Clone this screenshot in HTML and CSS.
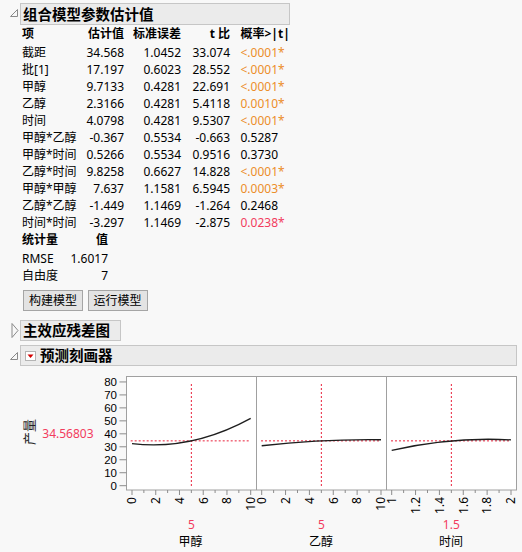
FILE: index.html
```html
<!DOCTYPE html>
<html>
<head>
<meta charset="utf-8">
<link rel="stylesheet" href="styles.css">
</head>
<body>
<div class="outline-head">
  <svg class="disclosure" width="20" height="22" viewBox="0 0 20 22"><polygon points="10.5,13.5 17.5,13.5 17.5,6.5" class="tri"/></svg>
  <div class="title-box w1">组合模型参数估计值</div>
</div>
<div class="params">
  <div class="th">项</div><div class="th r">估计值</div><div class="th r">标准误差</div><div class="th r">t 比</div><div class="th p">概率&gt;|t|</div>
  <div>截距</div><div class="r">34.568</div><div class="r">1.0452</div><div class="r">33.074</div><div class="p orange">&lt;.0001*</div>
  <div>批[1]</div><div class="r">17.197</div><div class="r">0.6023</div><div class="r">28.552</div><div class="p orange">&lt;.0001*</div>
  <div>甲醇</div><div class="r">9.7133</div><div class="r">0.4281</div><div class="r">22.691</div><div class="p orange">&lt;.0001*</div>
  <div>乙醇</div><div class="r">2.3166</div><div class="r">0.4281</div><div class="r">5.4118</div><div class="p orange">0.0010*</div>
  <div>时间</div><div class="r">4.0798</div><div class="r">0.4281</div><div class="r">9.5307</div><div class="p orange">&lt;.0001*</div>
  <div>甲醇*乙醇</div><div class="r">-0.367</div><div class="r">0.5534</div><div class="r">-0.663</div><div class="p">0.5287</div>
  <div>甲醇*时间</div><div class="r">0.5266</div><div class="r">0.5534</div><div class="r">0.9516</div><div class="p">0.3730</div>
  <div>乙醇*时间</div><div class="r">9.8258</div><div class="r">0.6627</div><div class="r">14.828</div><div class="p orange">&lt;.0001*</div>
  <div>甲醇*甲醇</div><div class="r">7.637</div><div class="r">1.1581</div><div class="r">6.5945</div><div class="p orange">0.0003*</div>
  <div>乙醇*乙醇</div><div class="r">-1.449</div><div class="r">1.1469</div><div class="r">-1.264</div><div class="p">0.2468</div>
  <div>时间*时间</div><div class="r">-3.297</div><div class="r">1.1469</div><div class="r">-2.875</div><div class="p red">0.0238*</div>
</div>
<div class="stats">
  <div class="th">统计量</div><div class="th r">值</div>
  <div>RMSE</div><div class="r">1.6017</div>
  <div>自由度</div><div class="r">7</div>
</div>
<div class="buttons">
  <button class="btn">构建模型</button>
  <button class="btn">运行模型</button>
</div>
<div class="outline-head h2">
  <svg class="disclosure" width="20" height="21" viewBox="0 0 20 21"><polygon points="12,3.5 18,10.5 12,17.5" class="tri"/></svg>
  <div class="title-box w2">主效应残差图</div>
</div>
<div class="outline-head h3">
  <svg class="disclosure" width="20" height="21" viewBox="0 0 20 21"><polygon points="10.5,14.5 17.5,14.5 17.5,7.5" class="tri"/></svg>
  <div class="title-box w3">
    <svg class="menu-icon" width="11" height="10" viewBox="0 0 11 10"><rect x="0.5" y="0.5" width="10" height="9" fill="#fff" stroke="#b4b4b4"/><polygon points="2.5,3.5 8.5,3.5 5.5,7" fill="#d40000"/></svg>
    <span>预测刻画器</span>
  </div>
</div>
<svg class="profiler" width="522" height="186" viewBox="0 366 522 186">
  <text class="ytitle" transform="translate(29,432) rotate(-90)" text-anchor="middle" dy="0.36em">产量</text>
  <text class="redtxt" x="42.3" y="434" dy="0.36em">34.56803</text>
  <rect x="126.5" y="376.5" width="390" height="113.5" fill="#fff" stroke="#a0a0a0"/>
  <line x1="256.5" y1="376.5" x2="256.5" y2="490" stroke="#a0a0a0"/>
  <line x1="386.5" y1="376.5" x2="386.5" y2="490" stroke="#a0a0a0"/>
  <g stroke="#8c8c8c">
    <line x1="119.5" y1="485.7" x2="126.5" y2="485.7"/>
    <line x1="119.5" y1="472.73" x2="126.5" y2="472.73"/>
    <line x1="119.5" y1="459.76" x2="126.5" y2="459.76"/>
    <line x1="119.5" y1="446.79" x2="126.5" y2="446.79"/>
    <line x1="119.5" y1="433.82" x2="126.5" y2="433.82"/>
    <line x1="119.5" y1="420.85" x2="126.5" y2="420.85"/>
    <line x1="119.5" y1="407.88" x2="126.5" y2="407.88"/>
    <line x1="119.5" y1="394.91" x2="126.5" y2="394.91"/>
    <line x1="119.5" y1="381.94" x2="126.5" y2="381.94"/>
  </g>
  <g class="ytick" text-anchor="end">
    <text x="117" y="485.7" dy="0.36em">0</text>
    <text x="117" y="472.73" dy="0.36em">10</text>
    <text x="117" y="459.76" dy="0.36em">20</text>
    <text x="117" y="446.79" dy="0.36em">30</text>
    <text x="117" y="433.82" dy="0.36em">40</text>
    <text x="117" y="420.85" dy="0.36em">50</text>
    <text x="117" y="407.88" dy="0.36em">60</text>
    <text x="117" y="394.91" dy="0.36em">70</text>
    <text x="117" y="381.94" dy="0.36em">80</text>
  </g>
  <g stroke="#8c8c8c">
    <path d="M132 490v5M143.87 490v3M155.74 490v5M167.61 490v3M179.48 490v5M191.35 490v3M203.22 490v5M215.09 490v3M226.96 490v5M238.83 490v3M250.7 490v5"/>
    <path d="M261.7 490v5M273.63 490v3M285.56 490v5M297.49 490v3M309.42 490v5M321.35 490v3M333.28 490v5M345.21 490v3M357.14 490v5M369.07 490v3M381 490v5"/>
    <path d="M391.7 490v5M403.63 490v3M415.56 490v5M427.49 490v3M439.42 490v5M451.35 490v3M463.28 490v5M475.21 490v3M487.14 490v5M499.07 490v3M511 490v5"/>
  </g>
  <g class="axtxt" text-anchor="end">
    <text transform="translate(132,497) rotate(-90)" dy="0.36em">0</text>
    <text transform="translate(155.74,497) rotate(-90)" dy="0.36em">2</text>
    <text transform="translate(179.48,497) rotate(-90)" dy="0.36em">4</text>
    <text transform="translate(203.22,497) rotate(-90)" dy="0.36em">6</text>
    <text transform="translate(226.96,497) rotate(-90)" dy="0.36em">8</text>
    <text transform="translate(250.7,497) rotate(-90)" dy="0.36em">10</text>
    <text transform="translate(261.7,497) rotate(-90)" dy="0.36em">0</text>
    <text transform="translate(285.56,497) rotate(-90)" dy="0.36em">2</text>
    <text transform="translate(309.42,497) rotate(-90)" dy="0.36em">4</text>
    <text transform="translate(333.28,497) rotate(-90)" dy="0.36em">6</text>
    <text transform="translate(357.14,497) rotate(-90)" dy="0.36em">8</text>
    <text transform="translate(381,497) rotate(-90)" dy="0.36em">10</text>
    <text transform="translate(391.7,497) rotate(-90)" dy="0.36em">1</text>
    <text transform="translate(415.56,497) rotate(-90)" dy="0.36em">1.2</text>
    <text transform="translate(439.42,497) rotate(-90)" dy="0.36em">1.4</text>
    <text transform="translate(463.28,497) rotate(-90)" dy="0.36em">1.6</text>
    <text transform="translate(487.14,497) rotate(-90)" dy="0.36em">1.8</text>
    <text transform="translate(511,497) rotate(-90)" dy="0.36em">2</text>
  </g>
  <g stroke="#e8203a" stroke-width="1" stroke-dasharray="2 2" fill="none">
    <line x1="130.7" y1="440.86" x2="250.5" y2="440.86"/>
    <line x1="191.35" y1="384" x2="191.35" y2="487"/>
    <line x1="261" y1="440.86" x2="381" y2="440.86"/>
    <line x1="321.35" y1="384" x2="321.35" y2="487"/>
    <line x1="391" y1="440.86" x2="511" y2="440.86"/>
    <line x1="451.35" y1="384" x2="451.35" y2="487"/>
  </g>
  <g stroke="#1e1e1e" stroke-width="1.3" fill="none">
    <path d="M132 443.56 Q191.35 450.77 250.7 418.36"/>
    <path d="M261.7 445.75 Q321.35 438.99 381 439.74"/>
    <path d="M391.7 450.43 Q451.35 436.59 511 439.85"/>
  </g>
  <g text-anchor="middle">
    <text class="redtxt" x="191.35" y="524.7" dy="0.36em">5</text>
    <text class="xname" x="190.5" y="541.7" dy="0.36em">甲醇</text>
    <text class="redtxt" x="321.35" y="524.7" dy="0.36em">5</text>
    <text class="xname" x="321" y="541.7" dy="0.36em">乙醇</text>
    <text class="redtxt" x="451.35" y="524.7" dy="0.36em">1.5</text>
    <text class="xname" x="451" y="541.7" dy="0.36em">时间</text>
  </g>
</svg>
</body>
</html>
```

FILE: styles.css
```css
* { box-sizing: border-box; }
html, body { margin: 0; padding: 0; }
body {
  background: #f8f8f8;
  font-family: "Noto Sans", "Noto Sans CJK SC", sans-serif;
  font-size: 12px;
  color: #000;
  width: 522px;
  height: 552px;
  overflow: hidden;
  padding-top: 3px;
}
.outline-head {
  display: flex;
  height: 22px;
}
.outline-head.h2 { margin-top: 9px; height: 21px; }
.outline-head.h3 { margin-top: 4px; height: 21px; }
.disclosure { flex: none; display: block; }
.tri { fill: none; stroke: #8a8a8a; stroke-width: 1; }
.title-box {
  background: #ebebeb;
  border: 1px solid #c6c6c6;
  font-weight: bold;
  font-size: 14.5px;
  line-height: 19px;
  padding-left: 2px;
  display: flex;
  align-items: center;
  white-space: nowrap;
}
.w1 { width: 270px; }
.w2 { width: 101px; }
.w3 { width: 497px; }
.menu-icon { margin: 0 4px 0 2px; flex: none; }
.params {
  display: grid;
  grid-template-columns: 58px 44px 57px 49px 52px;
  grid-template-rows: 19px;
  grid-auto-rows: 17px;
  margin-left: 22px;
  line-height: 17px;
  white-space: nowrap;
}
.stats {
  display: grid;
  grid-template-columns: 48px 38px;
  grid-template-rows: 19px;
  grid-auto-rows: 17px;
  margin-left: 22px;
  line-height: 17px;
  white-space: nowrap;
}
.th { font-weight: bold; }
.r { text-align: right; }
.p { padding-left: 10.5px; }
.orange { color: #ec8e2a; }
.red { color: #f23c5e; }
.buttons {
  display: flex;
  gap: 4.6px;
  margin: 6px 0 0 23px;
}
.btn {
  width: 60px;
  height: 21px;
  padding: 0;
  border: 1px solid #a5a5a5;
  background: #e3e3e3;
  font-family: inherit;
  font-size: 12px;
  line-height: 19px;
  color: #000;
  text-align: center;
}
.profiler {
  display: block;
  font-family: "Noto Sans", "Noto Sans CJK SC", sans-serif;
}
.ytick { font-family: "Liberation Sans", sans-serif; font-size: 11.5px; fill: #000; }
.axtxt { font-size: 12px; fill: #000; }
.ytitle { font-size: 13px; fill: #222; }
.redtxt { font-size: 12px; fill: #f23c5e; }
.xname { font-size: 12px; fill: #000; }
```
